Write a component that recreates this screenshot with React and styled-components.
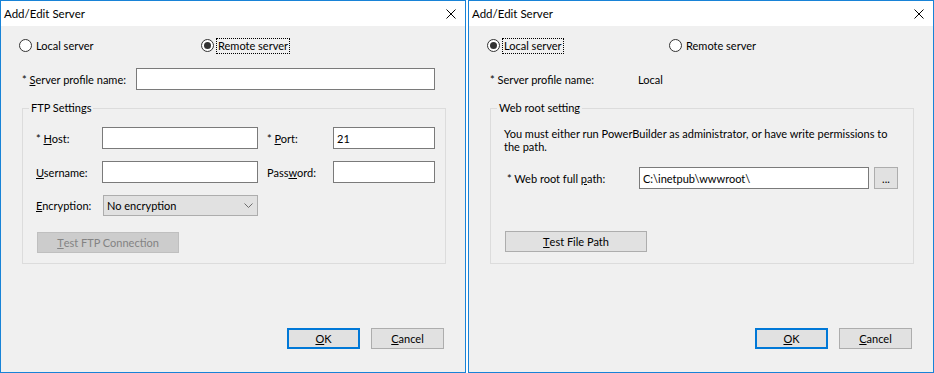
import React from 'react';
import styled, { createGlobalStyle } from 'styled-components';

const colorFrame = "#1883d7";
const colorFace = "#f0f0f0";
const colorButton = "#e1e1e1";
const colorButtonBorder = "#adadad";
const colorAccent = "#0078d7";
const colorEdit = "#7a7a7a";
const colorGroup = "#dcdcdc";

const GlobalStyle = createGlobalStyle`
  html, body {
    margin: 0;
    padding: 0;
    background: #ffffff;
  }
  body {
    font-family: Lato, "Noto Sans", sans-serif;
    font-size: 11px;
    color: #000000;
  }
  * {
    box-sizing: border-box;
  }
`;

const Screen = styled.div`
  display: flex;
  gap: 2px;
  width: 934px;
  height: 373px;
`;

const Window = styled.div`
  width: 466px;
  height: 373px;
  border: 1px solid ${colorFrame};
  background: ${colorFace};
  display: flex;
  flex-direction: column;
`;

const TitleBar = styled.div`
  flex: none;
  height: 25px;
  background: #ffffff;
  display: flex;
  align-items: center;
  padding-left: 3px;
  font-size: 11.5px;
`;

const Title = styled.span`
  flex: 1;
`;

const CloseButton = styled.div`
  width: 28px;
  height: 25px;
  display: flex;
  align-items: center;
  justify-content: center;
`;

const Body = styled.div`
  flex: 1;
  display: flex;
  flex-direction: column;
`;

const RadioRow = styled.div`
  display: flex;
  align-items: center;
  height: 17px;
  margin-top: 11px;
  padding-left: 18px;
`;

const RadioOption = styled.label`
  display: flex;
  align-items: center;
  width: ${p => p.$w ? `${p.$w}px` : 'auto'};
  flex: none;
`;

const RadioCircle = styled.span`
  width: 13px;
  height: 13px;
  border-radius: 50%;
  border: 1px solid #333333;
  background: #ffffff;
  display: flex;
  align-items: center;
  justify-content: center;
  margin-right: 2px;

  &::after {
    content: "";
    width: 7px;
    height: 7px;
    border-radius: 50%;
    background: ${p => p.$checked ? '#333333' : 'transparent'};
  }
`;

const FocusText = styled.span`
  border: 1px dotted ${p => p.$focused ? '#000000' : 'transparent'};
  padding: 0 1px;
  line-height: 14px;
`;

const FormRow = styled.div`
  display: flex;
  align-items: center;
  height: 22px;
  margin-top: ${p => p.$mt || 0}px;
  padding-left: ${p => p.$pl || 0}px;
`;

const Label = styled.span`
  flex: none;
  width: ${p => p.$w}px;
  padding-left: ${p => p.$pl || 0}px;
  margin-left: ${p => p.$ml || 0}px;
  white-space: nowrap;
`;

const TextBox = styled.div`
  flex: none;
  width: ${p => p.$w}px;
  height: 22px;
  background: #ffffff;
  border: 1px solid ${colorEdit};
  display: flex;
  align-items: center;
  padding-left: 3px;
  white-space: nowrap;
`;

const Select = styled.div`
  flex: none;
  width: ${p => p.$w}px;
  height: 21px;
  background: ${colorButton};
  border: 1px solid ${colorButtonBorder};
  display: flex;
  align-items: center;
  justify-content: space-between;
  padding: 0 4px 0 3px;
`;

const Button = styled.div`
  flex: none;
  width: ${p => p.$w}px;
  height: ${p => p.$h || 21}px;
  margin-left: ${p => p.$ml || 0}px;
  margin-top: ${p => p.$mt || 0}px;
  background: ${p => p.$disabled ? '#cccccc' : colorButton};
  border: ${p => p.$default ? `2px solid ${colorAccent}` : `1px solid ${p.$disabled ? '#bfbfbf' : colorButtonBorder}`};
  color: ${p => p.$disabled ? '#838383' : '#000000'};
  display: flex;
  align-items: center;
  justify-content: center;
  white-space: nowrap;
`;

const Group = styled.fieldset`
  margin: 10px 0 0 21px;
  width: 424px;
  height: 164px;
  border: 1px solid ${colorGroup};
  padding: 11px 13px 0 13px;
  min-width: 0;
`;

const GroupTitle = styled.legend`
  padding: 0 2px;
  margin-left: -7px;
  line-height: 16px;
`;

const Note = styled.p`
  margin: 0;
  line-height: 13px;
  white-space: nowrap;
`;

const Footer = styled.div`
  margin-top: auto;
  display: flex;
  justify-content: flex-end;
  gap: 11px;
  padding: 0 21px 23px 0;
`;

const Key = styled.u`
  text-decoration: underline;
  text-underline-offset: 1px;
`;

function CloseIcon() {
  return (
    <svg width="10" height="10" viewBox="0 0 10 10">
      <path d="M0.5 0.5 L9.5 9.5 M9.5 0.5 L0.5 9.5" stroke="#000000" strokeWidth="1" fill="none" />
    </svg>
  );
}

function Chevron() {
  return (
    <svg width="9" height="5" viewBox="0 0 9 5">
      <path d="M0.5 0.5 L4.5 4.5 L8.5 0.5" stroke="#606060" strokeWidth="0.9" fill="none" />
    </svg>
  );
}

function Frame({ children }) {
  return (
    <Window>
      <TitleBar>
        <Title>Add/Edit Server</Title>
        <CloseButton><CloseIcon /></CloseButton>
      </TitleBar>
      <Body>{children}</Body>
    </Window>
  );
}

function ServerChoice({ remote }) {
  return (
    <RadioRow>
      <RadioOption $w={182}>
        <RadioCircle $checked={!remote} />
        <FocusText $focused={!remote}>Local server</FocusText>
      </RadioOption>
      <RadioOption>
        <RadioCircle $checked={remote} />
        <FocusText $focused={remote}>Remote server</FocusText>
      </RadioOption>
    </RadioRow>
  );
}

function Buttons() {
  return (
    <Footer>
      <Button $w={73} $default><Key>O</Key>K</Button>
      <Button $w={73}><Key>C</Key>ancel</Button>
    </Footer>
  );
}

function RemoteDialog() {
  return (
    <Frame>
      <ServerChoice remote />
      <FormRow $mt={14} $pl={21}>
        <Label $w={114}>* <Key>S</Key>erver profile name:</Label>
        <TextBox $w={299} />
      </FormRow>
      <Group>
        <GroupTitle>FTP Settings</GroupTitle>
        <FormRow>
          <Label $w={66}>* <Key>H</Key>ost:</Label>
          <TextBox $w={156} />
          <Label $w={75} $pl={9}>* <Key>P</Key>ort:</Label>
          <TextBox $w={102}>21</TextBox>
        </FormRow>
        <FormRow $mt={12}>
          <Label $w={66}><Key>U</Key>sername:</Label>
          <TextBox $w={156} />
          <Label $w={75} $pl={9}>Pass<Key>w</Key>ord:</Label>
          <TextBox $w={102} />
        </FormRow>
        <FormRow $mt={11}>
          <Label $w={67}><Key>E</Key>ncryption:</Label>
          <Select $w={155}>
            <span>No encryption</span>
            <Chevron />
          </Select>
        </FormRow>
        <Button $w={142} $ml={1} $mt={16} $disabled><Key>T</Key>est FTP Connection</Button>
      </Group>
      <Buttons />
    </Frame>
  );
}

function LocalDialog() {
  return (
    <Frame>
      <ServerChoice />
      <FormRow $mt={14} $pl={21}>
        <Label $w={148}>* Server profile name:</Label>
        <span>Local</span>
      </FormRow>
      <Group>
        <GroupTitle>Web root setting</GroupTitle>
        <Note>
          You must either run PowerBuilder as administrator, or have write permissions to
          <br />
          the path.
        </Note>
        <FormRow $mt={14}>
          <Label $w={132} $ml={3}>* Web root full <Key>p</Key>ath:</Label>
          <TextBox $w={230}>{"C:\\inetpub\\wwwroot\\"}</TextBox>
          <Button $w={24} $h={22} $ml={5}>...</Button>
        </FormRow>
        <Button $w={142} $ml={1} $mt={42}><Key>T</Key>est File Path</Button>
      </Group>
      <Buttons />
    </Frame>
  );
}

export default function App() {
  return (
    <>
      <GlobalStyle />
      <Screen>
        <RemoteDialog />
        <LocalDialog />
      </Screen>
    </>
  );
}
